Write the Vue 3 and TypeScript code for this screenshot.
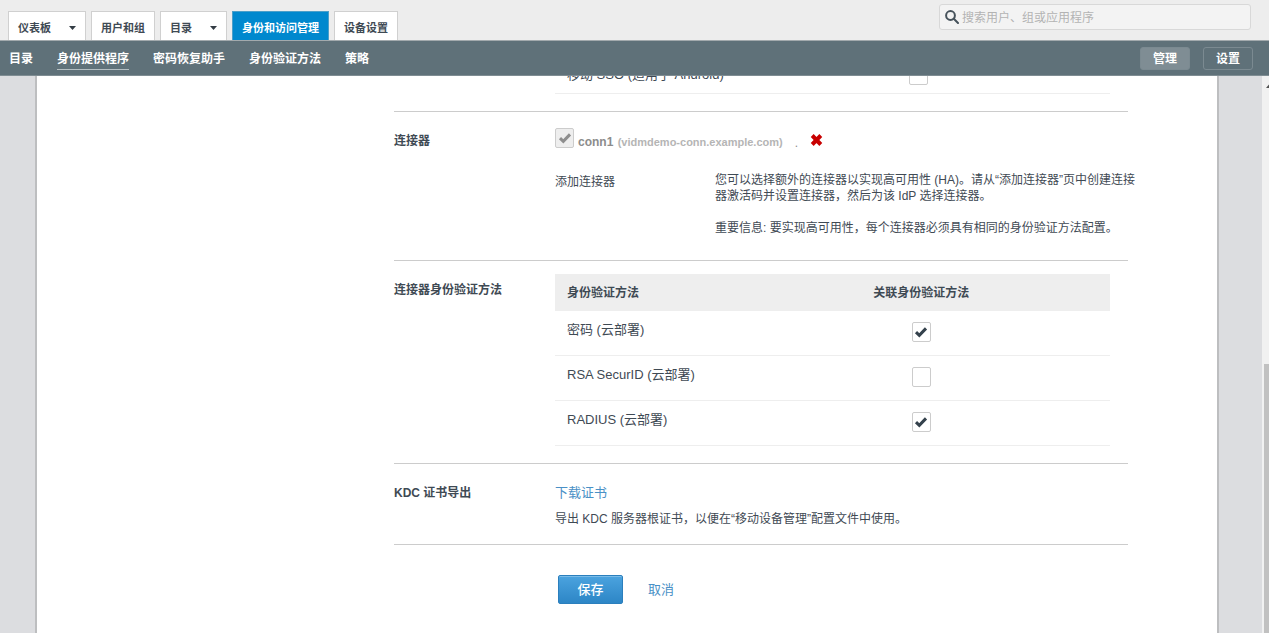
<script setup lang="ts">
import { ref } from 'vue'

interface Tab {
  label: string
  menu?: boolean
  active?: boolean
}

interface AuthMethod {
  id: string
  name: string
  linked: boolean
}

const tabs: Tab[] = [
  { label: '仪表板', menu: true },
  { label: '用户和组' },
  { label: '目录', menu: true },
  { label: '身份和访问管理', active: true },
  { label: '设备设置' },
]

const subnav: Tab[] = [
  { label: '目录' },
  { label: '身份提供程序', active: true },
  { label: '密码恢复助手' },
  { label: '身份验证方法' },
  { label: '策略' },
]

const mobileSso = ref(false)
const methods = ref<AuthMethod[]>([
  { id: 'password', name: '密码 (云部署)', linked: true },
  { id: 'securid', name: 'RSA SecurID (云部署)', linked: false },
  { id: 'radius', name: 'RADIUS (云部署)', linked: true },
])
</script>

<template>
  <div class="app">
    <header class="topbar">
      <nav class="tabs">
        <a v-for="tab in tabs" :key="tab.label" href="#" class="tab" :class="{ active: tab.active }">
          {{ tab.label }}
          <svg v-if="tab.menu" class="caret" viewBox="0 0 7 4"><path d="M0 0h7L3.5 4z" /></svg>
        </a>
      </nav>
      <div class="search">
        <svg class="search-icon" viewBox="0 0 14 14">
          <circle cx="5.5" cy="5.5" r="4.4" />
          <path d="M8.8 8.8 13 13" />
        </svg>
        <input type="text" aria-label="搜索" placeholder="搜索用户、组或应用程序" />
      </div>
    </header>

    <nav class="subnav">
      <a v-for="item in subnav" :key="item.label" href="#" class="sublink" :class="{ active: item.active }">{{ item.label }}</a>
      <div class="modes">
        <button type="button" class="mode active">管理</button>
        <button type="button" class="mode">设置</button>
      </div>
    </nav>

    <div class="body">
      <main class="panel">
        <form class="form" @submit.prevent>
          <section class="section">
            <div class="field mobile">
              <table class="methods compact">
                <tbody>
                  <tr>
                    <td><label for="sso">移动 SSO (适用于 Android)</label></td>
                    <td class="center">
                      <span class="check">
                        <input id="sso" v-model="mobileSso" type="checkbox" />
                        <svg viewBox="0 0 14 12"><path d="M2 6.2 5.3 9.4 12 2.4" /></svg>
                      </span>
                    </td>
                  </tr>
                </tbody>
              </table>
            </div>
          </section>

          <section class="section">
            <h2 class="label">连接器</h2>
            <div class="field connector">
              <div class="conn">
                <span class="check">
                  <input id="conn1" type="checkbox" checked disabled />
                  <svg viewBox="0 0 14 12"><path d="M2 6.2 5.3 9.4 12 2.4" /></svg>
                </span>
                <label for="conn1" class="conn-name">conn1 <span class="host">(vidmdemo-conn.example.com)</span></label>
                <span class="dot">.</span>
                <button type="button" class="remove" aria-label="移除">
                  <svg viewBox="0 0 13 14"><path d="M2.2 2.5 10.8 11.5M10.8 2.5 2.2 11.5" /></svg>
                </button>
              </div>
              <div class="add">
                <h3 class="add-title">添加连接器</h3>
                <div class="help">
                  <p>您可以选择额外的连接器以实现高可用性 (HA)。请从“添加连接器”页中创建连接<br />器激活码并设置连接器，然后为该 IdP 选择连接器。</p>
                  <p>重要信息: 要实现高可用性，每个连接器必须具有相同的身份验证方法配置。</p>
                </div>
              </div>
            </div>
          </section>

          <section class="section">
            <h2 class="label">连接器身份验证方法</h2>
            <div class="field auth">
              <table class="methods">
                <thead>
                  <tr>
                    <th scope="col">身份验证方法</th>
                    <th scope="col" class="center">关联身份验证方法</th>
                  </tr>
                </thead>
                <tbody>
                  <tr v-for="method in methods" :key="method.id">
                    <td><label :for="method.id">{{ method.name }}</label></td>
                    <td class="center">
                      <span class="check">
                        <input :id="method.id" v-model="method.linked" type="checkbox" />
                        <svg viewBox="0 0 14 12"><path d="M2 6.2 5.3 9.4 12 2.4" /></svg>
                      </span>
                    </td>
                  </tr>
                </tbody>
              </table>
            </div>
          </section>

          <section class="section">
            <h2 class="label">KDC 证书导出</h2>
            <div class="field kdc">
              <a href="#" class="link">下载证书</a>
              <p>导出 KDC 服务器根证书，以便在“移动设备管理”配置文件中使用。</p>
            </div>
          </section>

          <div class="actions">
            <button type="submit" class="save">保存</button>
            <a href="#" class="link">取消</a>
          </div>
        </form>
      </main>
      <div class="scrollbar">
        <svg class="scroll-up" viewBox="0 0 7 4"><path d="M0 4h7L3.5 0z" /></svg>
        <div class="thumb"></div>
      </div>
    </div>
  </div>
</template>

<style>
html,
body {
  margin: 0;
  overflow: hidden;
}
</style>

<style scoped>
* {
  box-sizing: border-box;
}

.app {
  display: flex;
  flex-direction: column;
  height: 100vh;
  color: #3f4a54;
  font: 12px/16px "Liberation Sans", "Noto Sans CJK SC", sans-serif;
}

h2,
h3,
p {
  margin: 0;
  font-size: 12px;
}

button,
input {
  margin: 0;
  font: inherit;
}

.topbar {
  display: flex;
  flex: none;
  justify-content: space-between;
  align-items: flex-end;
  height: 41px;
  padding: 0 18px 0 8px;
  background: #ededed;
  border-bottom: 1px solid #a3aaad;
}

.tabs {
  display: flex;
  gap: 5px;
}

.tab {
  display: flex;
  align-items: center;
  gap: 18px;
  height: 29px;
  padding: 3px 9px 0;
  background: #fff;
  border: 1px solid #d0d0d0;
  border-bottom: 0;
  color: #3f4a54;
  font-size: 11px;
  font-weight: 700;
  text-decoration: none;
  white-space: nowrap;
}

.tab.active {
  background: #0088ce;
  border-color: #4b9fc9;
  color: #fff;
}

.caret {
  width: 7px;
  height: 4px;
  fill: #333c44;
}

.search {
  display: flex;
  align-items: center;
  align-self: flex-start;
  gap: 3px;
  width: 312px;
  height: 26px;
  margin-top: 4px;
  padding: 0 5px;
  background: #f3f3f3;
  border: 1px solid #d8d8d8;
  border-radius: 3px;
}

.search-icon {
  flex: none;
  width: 14px;
  height: 14px;
  fill: none;
  stroke: #46525b;
  stroke-width: 2;
  stroke-linecap: round;
}

.search input {
  flex: 1;
  min-width: 0;
  padding: 2px 0 0;
  background: none;
  border: 0;
  outline: 0;
}

.search input::placeholder {
  color: #b3b3b3;
  opacity: 1;
}

.subnav {
  display: flex;
  flex: none;
  align-items: center;
  gap: 24px;
  height: 35px;
  padding: 0 16px 0 9px;
  background: #5f7179;
  border-bottom: 1px solid #7f8d93;
}

.sublink {
  height: 23px;
  padding: 4px 0 2px;
  border-bottom: 1px solid transparent;
  color: #fff;
  font-weight: 700;
  line-height: 16px;
  text-decoration: none;
  white-space: nowrap;
}

.sublink.active {
  border-bottom-color: #b5bfc3;
}

.modes {
  display: flex;
  gap: 13px;
  margin-left: auto;
}

.mode {
  width: 50px;
  height: 23px;
  padding: 1px 0 0;
  background: none;
  border: 1px solid #7b8a91;
  border-radius: 3px;
  color: #fff;
  font-weight: 700;
}

.mode.active {
  background: #7f8d94;
}

.body {
  display: flex;
  flex: 1;
  min-height: 0;
  overflow: hidden;
  background: #dcdde0;
}

.panel {
  flex: 1;
  min-width: 0;
  margin: 0 43px 0 35px;
  padding: 0 89px 0 357px;
  background: #fff;
  border: solid #bdbec0;
  border-width: 0 2px;
}

.form {
  margin-top: -27px;
}

.section {
  display: grid;
  grid-template-columns: 161px minmax(0, 1fr);
  border-bottom: 1px solid #ccc;
}

.label {
  padding-top: 21px;
  font-weight: 700;
}

.field {
  grid-column: 2;
}

.mobile {
  padding: 0 18px 17px 0;
}

.connector {
  padding: 16px 0 24px;
}

.auth {
  padding: 13px 18px 17px 0;
}

.kdc {
  display: grid;
  gap: 10px;
  padding: 21px 0 17px;
}

.methods {
  width: 100%;
  border-collapse: separate;
  border-spacing: 0;
  table-layout: fixed;
  font-size: 13px;
}

.methods th {
  height: 37px;
  padding: 0 12px;
  background: #eee;
  font-size: 12px;
  font-weight: 700;
  text-align: left;
}

.methods td {
  height: 45px;
  padding: 11px 0 0 12px;
  border-bottom: 1px solid #eee;
  vertical-align: top;
  white-space: nowrap;
}

.methods .center {
  width: 68%;
  padding-right: 0;
  padding-left: 0;
  text-align: center;
}

.methods.compact td {
  padding-top: 18px;
}

.methods.compact .center {
  width: 69%;
  padding-top: 16px;
}

.check {
  display: inline-grid;
  flex: none;
  place-items: center;
  width: 19px;
  height: 20px;
  vertical-align: top;
}

.check input,
.check svg {
  grid-area: 1 / 1;
}

.check input {
  width: 19px;
  height: 20px;
  appearance: none;
  background: #fff;
  border: 1px solid #ccc;
  border-radius: 2px;
}

.check input:disabled {
  background: #eee;
}

.check svg {
  width: 14px;
  height: 12px;
  fill: none;
  stroke: #34414c;
  stroke-width: 3;
  pointer-events: none;
  visibility: hidden;
}

.check input:checked + svg {
  visibility: visible;
}

.check input:disabled + svg {
  stroke: #8e8e8e;
}

.conn {
  display: flex;
  align-items: center;
  gap: 4px;
  height: 20px;
}

.conn-name {
  padding-top: 8px;
  color: #8c8c8c;
  font-weight: 700;
}

.host {
  margin-left: 1px;
  color: #b5b5b5;
  font-size: 11px;
}

.dot {
  padding: 10px 8px 0;
  color: #8c8c8c;
}

.remove {
  width: 13px;
  height: 14px;
  margin-top: 4px;
  padding: 0;
  background: none;
  border: 0;
}

.remove svg {
  display: block;
  width: 13px;
  height: 14px;
  fill: none;
  stroke: #c80000;
  stroke-width: 4;
}

.add {
  display: grid;
  grid-template-columns: 160px minmax(0, 1fr);
  margin-top: 24px;
}

.add-title {
  padding-top: 2px;
  font-weight: 400;
}

.help {
  display: grid;
  gap: 16px;
  white-space: nowrap;
}

.link {
  justify-self: start;
  color: #4a90c6;
  font-size: 13px;
  text-decoration: none;
}

.actions {
  display: flex;
  align-items: center;
  gap: 25px;
  padding: 30px 0 0 164px;
}

.save {
  width: 65px;
  height: 29px;
  padding: 0;
  background: linear-gradient(#4ba3df, #2d86c6);
  border: 1px solid #2b7fbd;
  border-radius: 2px;
  box-shadow: inset 0 1px #7bbce8;
  color: #fff;
  font-size: 13px;
  font-weight: 500;
}

.scrollbar {
  display: flex;
  flex: none;
  flex-direction: column;
  align-items: flex-end;
  width: 7px;
  padding-top: 8px;
  background: #f1f1f1;
  overflow: hidden;
}

.scroll-up {
  flex: none;
  width: 7px;
  height: 4px;
  margin-right: -4px;
  fill: #505050;
}

.thumb {
  width: 5px;
  height: 49%;
  margin-top: auto;
  background: #c1c1c1;
}
</style>
